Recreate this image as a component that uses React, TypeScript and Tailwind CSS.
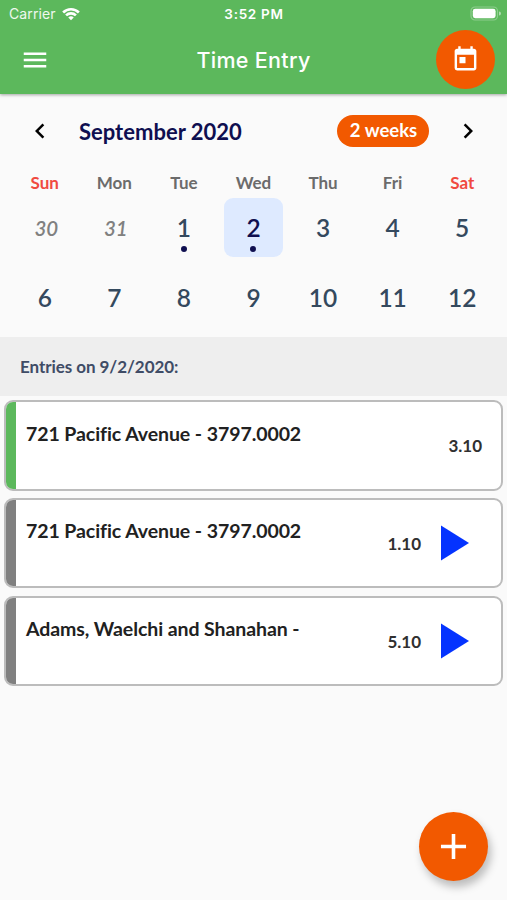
import clsx from 'clsx'
import { MdAdd, MdChevronLeft, MdChevronRight, MdMenu, MdToday } from 'react-icons/md'

interface Day {
  label: number
  outside?: boolean
  marked?: boolean
  selected?: boolean
}

interface Entry {
  id: number
  title: string
  hours: string
  running: boolean
}

const weekdays = ['Sun', 'Mon', 'Tue', 'Wed', 'Thu', 'Fri', 'Sat']

const days: Day[] = [
  { label: 30, outside: true },
  { label: 31, outside: true },
  { label: 1, marked: true },
  { label: 2, marked: true, selected: true },
  { label: 3 },
  { label: 4 },
  { label: 5 },
  { label: 6 },
  { label: 7 },
  { label: 8 },
  { label: 9 },
  { label: 10 },
  { label: 11 },
  { label: 12 },
]

const entries: Entry[] = [
  { id: 1, title: '721 Pacific Avenue - 3797.0002', hours: '3.10', running: true },
  { id: 2, title: '721 Pacific Avenue - 3797.0002', hours: '1.10', running: false },
  { id: 3, title: 'Adams, Waelchi and Shanahan -', hours: '5.10', running: false },
]

function StatusBar() {
  return (
    <div className="grid h-[27px] grid-cols-3 items-center pl-[9px] pr-[6px] text-[13px]">
      <div className="flex items-center gap-[6px] text-white/90">
        <span className="text-[14px] tracking-[0.1px]">Carrier</span>
        <svg width="18" height="14" viewBox="0 0 19 14" fill="none" stroke="#fff" strokeWidth="2.8">
          <path d="M1.2 5.4a11.8 11.8 0 0 1 16.6 0" />
          <path d="M4.3 8.5a7.4 7.4 0 0 1 10.4 0" />
          <path d="M9.5 13.6 6.6 10.7a4.1 4.1 0 0 1 5.8 0z" fill="#fff" stroke="none" />
        </svg>
      </div>
      <span className="-ml-[2px] pt-[1px] text-center text-[13.5px] font-semibold tracking-[0.7px]">3:52 PM</span>
      <svg className="justify-self-end" width="31" height="15" viewBox="0 0 31 15">
        <rect x="1" y="1" width="26.5" height="13" rx="4" fill="none" stroke="#fff" strokeOpacity="0.3" strokeWidth="1.2" />
        <rect x="2.8" y="2.8" width="22.8" height="9.4" rx="2.4" fill="#fff" />
        <path d="M29 5.5v4a2 2 0 0 0 0-4z" fill="#fff" fillOpacity="0.5" />
      </svg>
    </div>
  )
}

function AppBar() {
  return (
    <header className="h-[94px] bg-[#5cb85c] font-[Inter,sans-serif] text-white shadow-[0_1px_3px_rgba(0,0,0,0.35)]">
      <StatusBar />
      <div className="grid h-[65px] grid-cols-[59px_1fr_59px] items-center pl-5 pr-3">
        <button aria-label="Menu" className="justify-self-start">
          <MdMenu size={30} />
        </button>
        <h1 className="-ml-2 pt-[2px] text-center text-[21.5px] font-medium tracking-[0.3px]">Time Entry</h1>
        <button
          aria-label="Today"
          className="flex size-[59px] items-center justify-center justify-self-end rounded-full bg-[#f25900]"
        >
          <MdToday size={29} />
        </button>
      </div>
    </header>
  )
}

function Calendar() {
  return (
    <section className="h-[243px] px-[10px] pt-[20px]">
      <div className="flex h-[34px] items-center pl-[15px] pr-[14px]">
        <button aria-label="Previous">
          <MdChevronLeft size={30} className="text-black" />
        </button>
        <h2 className="ml-6 flex-1 text-[22px] font-bold text-[#0f0f50]">September 2020</h2>
        <button className="h-[32px] w-[92px] rounded-full bg-[#f25900] pl-[1px] text-[18.5px] font-bold text-white">
          2 weeks
        </button>
        <button aria-label="Next" className="ml-6">
          <MdChevronRight size={30} className="text-black" />
        </button>
      </div>

      <div className="mt-[22px] grid grid-cols-7 text-center text-[17px] leading-[26px] font-bold">
        {weekdays.map((name, i) => (
          <span key={name} className={i % 6 === 0 ? 'text-[#f04a40]' : 'text-[#6b6b6b]'}>
            {name}
          </span>
        ))}
      </div>

      <div className="mt-[2px] grid grid-cols-7 justify-items-center gap-y-[10px]">
        {days.map((day) => (
          <div
            key={day.label}
            className={clsx(
              'flex h-[59px] w-[59px] flex-col items-center rounded-[9px] pt-[14px] mb-px',
              day.selected && 'bg-[#deeaff]',
            )}
          >
            <span
              className={clsx(
                'leading-[32px]',
                day.outside && 'pl-[3px] text-[20.5px] font-semibold text-[#808080] italic',
                !day.outside && 'text-[24.5px] font-semibold',
                !day.outside && (day.selected ? 'text-[#0f0f50]' : 'text-[#34495e]'),
              )}
            >
              {day.label}
            </span>
            {day.marked && <span className="mt-[2px] size-[6px] rounded-full bg-[#0f0f50]" />}
          </div>
        ))}
      </div>
    </section>
  )
}

function EntryCard({ entry }: { entry: Entry }) {
  return (
    <li className="flex h-[90.5px] overflow-hidden rounded-[9px] border-2 border-[#bcbcbc] bg-white">
      <div className={clsx('-my-[2px] -ml-[2px] w-[12px] shrink-0', entry.running ? 'bg-[#5cb85c]' : 'bg-[#808080]')} />
      <p className="flex-1 pt-[17.5px] pl-[10px] text-[19.5px] leading-[28px] font-bold tracking-[-0.08px] text-[#212121]">
        {entry.title}
      </p>
      <div className="flex items-center gap-[20px] pr-[19px]">
        <span className="pt-[1px] text-[17px] font-bold text-[#303030]">{entry.hours}</span>
        {!entry.running && (
          <button aria-label="Start timer" className="pr-[13px]">
            <svg width="28" height="36" viewBox="0 0 28 36" fill="#0433ff">
              <path d="M0 0.5 28 18 0 35.5z" />
            </svg>
          </button>
        )}
      </div>
    </li>
  )
}

export default function App() {
  return (
    <div className="relative h-[900px] w-[507px] overflow-hidden bg-[#fafafa] font-[Lato,sans-serif]">
      <AppBar />
      <Calendar />
      <h3 className="h-[59px] bg-[#eeeeee] pl-5 text-[17px] leading-[60px] font-bold tracking-[-0.06px] text-[#3f4c66]">
        Entries on 9/2/2020:
      </h3>
      <ul className="space-y-[7.3px] px-[4px] pt-[4px]">
        {entries.map((entry) => (
          <EntryCard key={entry.id} entry={entry} />
        ))}
      </ul>
      <button
        aria-label="Add entry"
        className="absolute right-[19.5px] bottom-[19.5px] flex size-[69px] items-center justify-center rounded-full bg-[#f25900] text-white shadow-[3px_6px_9px_rgba(0,0,0,0.25)]"
      >
        <MdAdd size={43} />
      </button>
    </div>
  )
}
